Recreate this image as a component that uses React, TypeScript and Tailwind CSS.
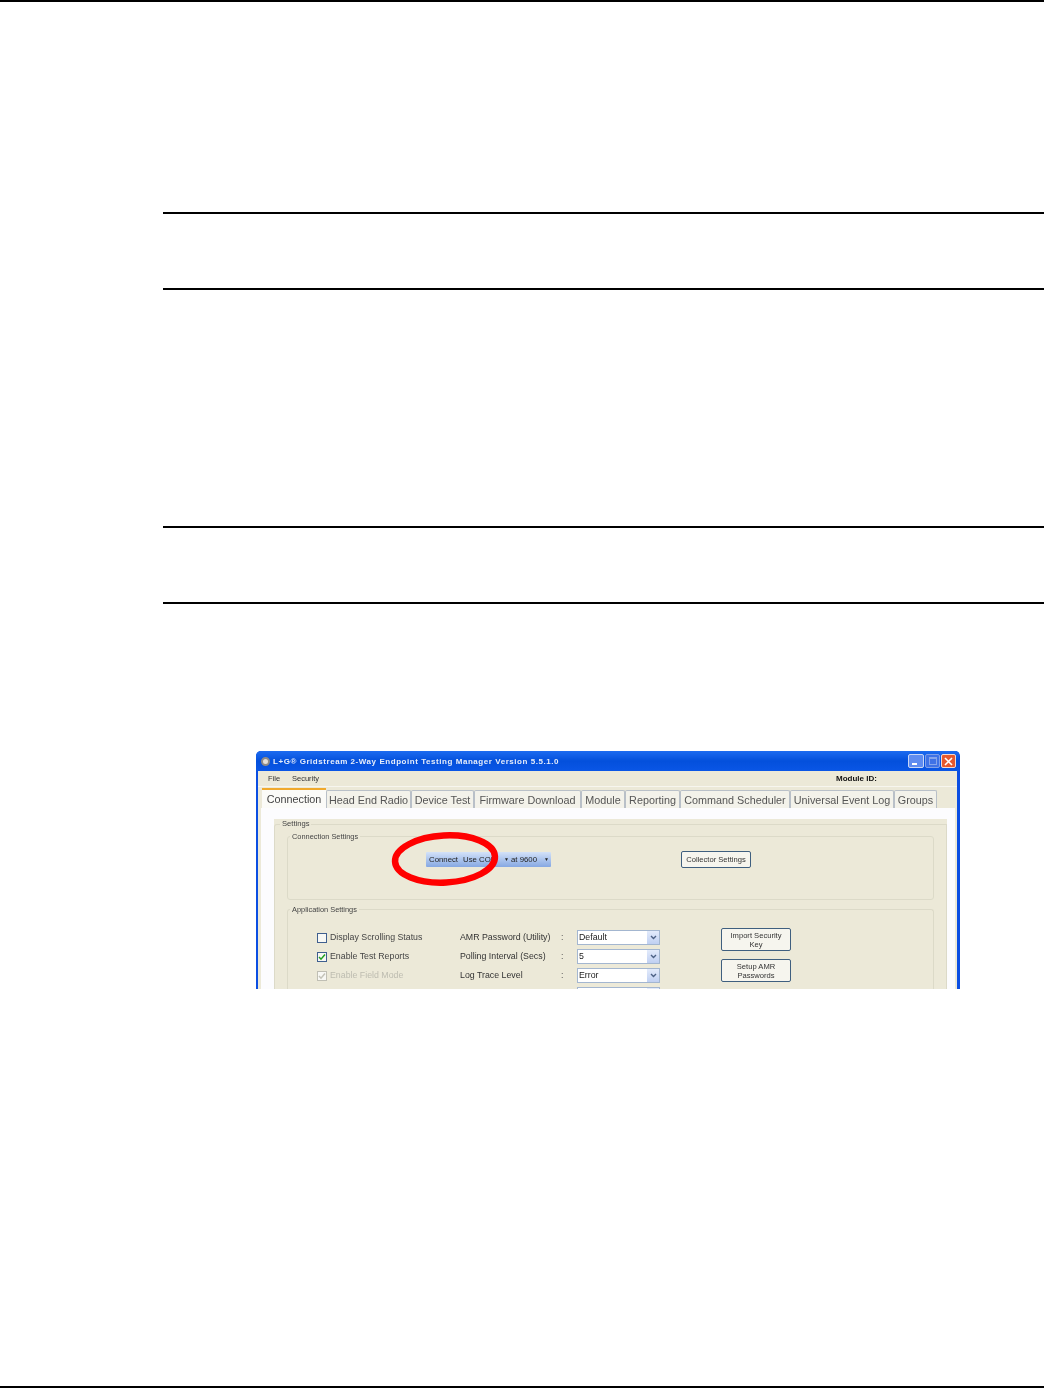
// App.tsx
const tabs = [
  { label: "Head End Radio", w: "w-[85px]" },
  { label: "Device Test", w: "w-[63px]" },
  { label: "Firmware Download", w: "w-[107px]" },
  { label: "Module", w: "w-[44px]" },
  { label: "Reporting", w: "w-[55px]" },
  { label: "Command Scheduler", w: "w-[110px]" },
  { label: "Universal Event Log", w: "w-[104px]" },
  { label: "Groups", w: "w-[43px]" },
];

const options = [
  { check: "Display Scrolling Status", state: "off", label: "AMR Password (Utility)", value: "Default" },
  { check: "Enable Test Reports", state: "on", label: "Polling Interval (Secs)", value: "5" },
  { check: "Enable Field Mode", state: "disabled", label: "Log Trace Level", value: "Error" },
];

function Check({ state }: { state: string }) {
  const border = state === "disabled" ? "border-[#c0bfb4]" : "border-[#3f5f8f]";
  const stroke = state === "disabled" ? "#c4c3b8" : "#21a121";
  return (
    <span className={`w-[10px] h-[10px] border ${border} bg-[#f8f8f4] flex items-center justify-center`}>
      {state !== "off" && (
        <svg width="8" height="8" viewBox="0 0 8 8" fill="none" aria-hidden="true">
          <path d="M1 4l2 2.2L7 1.5" stroke={stroke} strokeWidth="1.5" />
        </svg>
      )}
    </span>
  );
}

function SelectBox({ value }: { value: string }) {
  return (
    <div className="w-[83px] h-[15px] border border-[#a3b6d0] bg-white flex items-center justify-between">
      <span className="pl-[1px] text-[8.8px] text-[#222]">{value}</span>
      <span className="w-[12px] h-full bg-gradient-to-b from-[#e3ebfb] to-[#c0d0f2] flex items-center justify-center">
        <svg width="7" height="5" viewBox="0 0 7 5" fill="none" aria-hidden="true">
          <path d="M1 1l2.5 2.5L6 1" stroke="#4d6185" strokeWidth="1.4" />
        </svg>
      </span>
    </div>
  );
}

function XpWindow() {
  return (
    <div className="relative ml-[256px] mt-[147px] w-[704px] h-[238px] overflow-hidden rounded-t-[5px] bg-[#0b4ee2] pl-[2px] pr-[3px] font-['Liberation_Sans',sans-serif] blur-[0.4px]">
      {/* Title bar */}
      <div className="h-[20px] -mx-[2px] flex items-center bg-gradient-to-b from-[#1c6bf0] via-[#0450dc] to-[#0a56e6] pl-[5px] pr-[3px]">
        <span className="w-[9px] h-[9px] rounded-full bg-[#e4e0da] border-2 border-[#8e8a86]" />
        <span className="ml-[3px] pt-[2px] text-[8px] font-bold tracking-[0.55px] text-[#e6edfb]">
          L+G® Gridstream 2-Way Endpoint Testing Manager Version 5.5.1.0
        </span>
        <div className="ml-auto flex gap-[1px]">
          <span className="w-[16px] h-[14px] rounded-[2px] border border-[#c9d6f5] bg-[#5f8cf0] flex items-end pl-[3px] pb-[2px]">
            <span className="w-[5px] h-[2px] bg-white" />
          </span>
          <span className="w-[15px] h-[14px] rounded-[2px] border border-[#7f9fe8] bg-[#3f72e6] flex items-center justify-center">
            <span className="w-[8px] h-[8px] border border-[#86a5ec] border-t-2" />
          </span>
          <span className="w-[15px] h-[14px] rounded-[2px] border border-[#f3d9cf] bg-[#e5592f] flex items-center justify-center">
            <svg width="9" height="9" viewBox="0 0 9 9" fill="none" aria-hidden="true">
              <path d="M1 1l7 7M8 1L1 8" stroke="#fff" strokeWidth="1.6" />
            </svg>
          </span>
        </div>
      </div>

      <div className="h-[218px] bg-[#ece9d8]">
        {/* Menu */}
        <div className="h-[16px] flex items-center border-b border-[#f7f6ef] pl-[10px] pt-[1px] text-[7.5px] text-[#333]">
          <span className="w-[24px]">File</span>
          <span className="w-[544px]">Security</span>
          <span className="font-bold text-[8px] text-[#111]">Module ID:</span>
        </div>

        {/* Tabs */}
        <div className="flex items-end h-[21px] pl-[4px] text-[10.8px] text-[#555]">
          <div className="w-[64px] h-[20px] border-t-2 border-[#f0a92c] bg-[#fbfbf8] text-center leading-[18px] text-[#444]">
            Connection
          </div>
          {tabs.map((t) => (
            <div
              key={t.label}
              className={`${t.w} h-[18px] border border-[#b9c0c8] border-b-0 rounded-t-[2px] bg-[#f3f2ea] text-center leading-[18px] whitespace-nowrap`}
            >
              {t.label}
            </div>
          ))}
        </div>

        {/* Tab page */}
        <div className="ml-[3px] mr-[2px] h-[181px] bg-[#fcfcfe] pt-[11px] pl-[13px] pr-[8px]">
          <div className="h-[170px] bg-[#ece9d8] pt-[5px] relative">
            <div className="h-full border-l border-t border-r border-[#dcdac8] rounded-tl-[3px] px-[12px] pt-[11px]">
              <span className="absolute left-[6px] top-0 bg-[#ece9d8] px-[2px] text-[7.6px] leading-[10px] text-[#444]">
                Settings
              </span>

              {/* Connection Settings */}
              <div className="relative h-[64px] border border-[#dcdac8] rounded-[3px] flex items-start pt-[15px] pl-[138px]">
                <span className="absolute left-[2px] -top-[5px] bg-[#ece9d8] px-[2px] text-[7.4px] leading-[10px] text-[#444]">
                  Connection Settings
                </span>
                <div className="w-[125px] h-[15px] rounded-[1px] bg-gradient-to-b from-[#d4e2f8] to-[#86a8e2] flex items-center pl-[3px] text-[7.8px] text-[#222] whitespace-nowrap">
                  <span className="w-[34px]">Connect</span>
                  <span className="w-[41px]">Use COM</span>
                  <span className="w-[7px] text-[5px]">▼</span>
                  <span className="w-[33px]">at 9600</span>
                  <span className="text-[5px]">▼</span>
                </div>
                <button className="ml-[130px] -mt-[1px] w-[70px] h-[17px] border border-[#3f5f7f] rounded-[2px] bg-[#f6f5ee] text-[7.6px] text-[#333]">
                  Collector Settings
                </button>
              </div>

              {/* Application Settings */}
              <div className="relative mt-[9px] h-[90px] border-l border-t border-r border-[#dcdac8] rounded-t-[3px] pl-[29px] pt-[20px] flex">
                <span className="absolute left-[2px] -top-[5px] bg-[#ece9d8] px-[2px] text-[7.4px] leading-[10px] text-[#444]">
                  Application Settings
                </span>
                <div className="w-[404px] flex flex-col gap-[4px] text-[8.8px]">
                  {options.map((o) => (
                    <div key={o.check} className="flex items-center h-[15px]">
                      <div className="w-[143px] flex items-center gap-[3px]">
                        <Check state={o.state} />
                        <span className={o.state === "disabled" ? "text-[#bdbcb0]" : "text-[#444]"}>{o.check}</span>
                      </div>
                      <span className="w-[101px] text-[#333] whitespace-nowrap">{o.label}</span>
                      <span className="w-[16px] text-[#555]">:</span>
                      <SelectBox value={o.value} />
                    </div>
                  ))}
                  <div className="flex h-[15px] pl-[260px]">
                    <SelectBox value="" />
                  </div>
                </div>
                <div className="-mt-[2px] flex flex-col gap-[8px]">
                  <button className="w-[70px] h-[23px] border border-[#3f5f7f] rounded-[2px] bg-[#f6f5ee] px-[7px] text-[7.6px] leading-[9px] text-[#333]">
                    Import Security Key
                  </button>
                  <button className="w-[70px] h-[23px] border border-[#3f5f7f] rounded-[2px] bg-[#f6f5ee] px-[7px] text-[7.6px] leading-[9px] text-[#333]">
                    Setup AMR Passwords
                  </button>
                </div>
              </div>
            </div>
          </div>
        </div>
      </div>

      {/* Red annotation ring */}
      <svg className="absolute left-[134px] top-[79px]" width="110" height="58" viewBox="0 0 110 58" fill="none" aria-hidden="true">
        <ellipse cx="55" cy="29" rx="50" ry="23.5" stroke="#f00" strokeWidth="6.5" transform="rotate(-3 55 29)" />
      </svg>
    </div>
  );
}

export default function App() {
  return (
    <div className="w-[1044px] h-[1388px] bg-white flex flex-col">
      <div className="h-[2px] bg-black" />

      <div className="mt-[210px] ml-[163px] h-[78px] border-y-2 border-black" />
      <div className="mt-[236px] ml-[163px] h-[78px] border-y-2 border-black" />

      <XpWindow />

      <div className="mt-auto h-[2px] bg-black" />
    </div>
  );
}
